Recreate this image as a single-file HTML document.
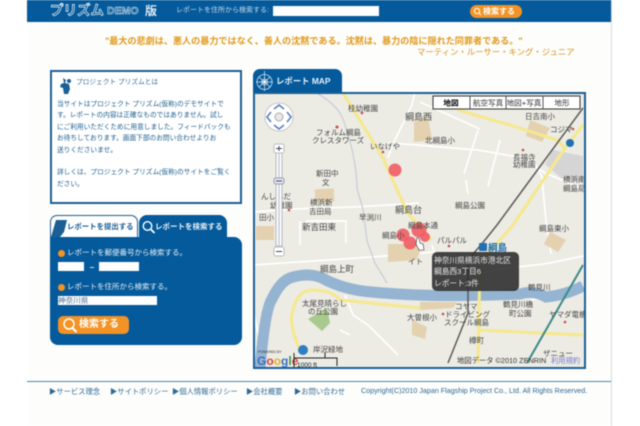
<!DOCTYPE html>
<html lang="ja"><head><meta charset="utf-8"><title>プリズム DEMO版</title>
<style>
html,body{margin:0;padding:0;background:#fff}
body{width:640px;height:426px;position:relative;overflow:hidden;font-family:"Liberation Sans","Noto Sans CJK JP",sans-serif}
#w{position:absolute;left:0;top:0;width:640px;height:426px;filter:blur(.4px)}
.a{position:absolute;white-space:nowrap}
.b{position:absolute}
svg text{font-family:"Liberation Sans","Noto Sans CJK JP",sans-serif}
</style></head><body><div id="w">
<div class="b" style="left:27px;top:0;width:584px;height:426px;background:#fdfdfc;border-right:1px solid #d8d8d8"></div>
<div class="b" style="left:27px;top:0;width:584px;height:22px;background:#045a9b"></div>
<div class="a" style="left:50px;top:1px;font-size:13.500px;line-height:20px;font-weight:bold;color:#045a9b;-webkit-text-stroke:.7px #e8f0f6">プリズム</div>
<div class="a" style="left:107px;top:1px;font-size:10.500px;line-height:20px;font-weight:bold;color:#045a9b;-webkit-text-stroke:.5px #e8f0f6">DEMO</div>
<div class="a" style="left:145px;top:1px;font-size:12px;line-height:20px;color:#dfeaf3;font-weight:bold">版</div>
<div class="a" style="left:176px;top:4px;font-size:7px;line-height:13px;color:#c6d8e8">レポートを住所から検索する:</div>
<div class="b" style="left:273px;top:6px;width:106px;height:10px;background:#fff"></div>
<div class="b" style="left:470px;top:5px;width:52px;height:13px;border-radius:7px;background:#f39325"></div>
<div class="a" style="left:483px;top:5px;font-size:8px;line-height:13px;font-weight:bold;color:#fff">検索する</div>
<svg class="b" style="left:473px;top:7px" width="9" height="9"><circle cx="4" cy="4" r="2.600" fill="none" stroke="#fff"/><path d="M6 6l2 2" stroke="#fff"/></svg>

<div class="a" style="left:105px;top:34px;font-size:9.100px;line-height:14px;color:#e09a1c;font-weight:bold">"最大の悲劇は、悪人の暴力ではなく、善人の沈黙である。沈黙は、暴力の陰に隠れた同罪者である。"</div>
<div class="a" style="left:417px;top:46px;font-size:8.400px;line-height:13px;color:#d8951e">マーティン・ルーサー・キング・ジュニア</div>

<div class="b" style="left:50px;top:70px;width:188px;height:130px;border:2px solid #1b5f94;background:#fff"></div>
<svg class="b" style="left:58px;top:77px" width="14" height="18"><path d="M5 1l3 2-1 3 4 1 1 5-2 5H6l-1-6-3-1 1-3 3-1z" fill="#1b5f94"/><circle cx="11" cy="4" r="2" fill="#1b5f94"/></svg>
<div class="a" style="left:76px;top:77px;font-size:6.700px;line-height:11px;color:#336f9b">プロジェクト プリズムとは</div>
<div class="a" style="left:57px;top:99px;font-size:6.700px;line-height:11.400px;color:#20618f">当サイトはプロジェクト プリズム(仮称)のデモサイトで<br>す。レポートの内容は正確なものではありません。試し<br>にご利用いただくために用意しました。フィードバックも<br>お待ちしております。画面下部のお問い合わせよりお<br>送りくださいませ。<br><br>詳しくは、プロジェクト プリズム(仮称)のサイトをご覧く<br>ださい。</div>

<div class="b" style="left:50px;top:215px;width:86px;height:22px;border:1px solid #1b5f94;border-bottom:0;border-radius:7px 7px 0 0;background:#fff"></div>
<svg class="b" style="left:51px;top:220px" width="17" height="17"><path d="M5 0h11l-3 12-4 5H0z" fill="#1b5f94"/></svg>
<div class="a" style="left:67px;top:221px;font-size:7.400px;line-height:11px;font-weight:bold;color:#1b5f94">レポートを提出する</div>
<div class="b" style="left:139px;top:215px;width:88px;height:30px;border-radius:8px 8px 0 0;background:#045a9b"></div>
<div class="b" style="left:50px;top:237px;width:192px;height:108px;border-radius:0 8px 8px 8px;background:#045a9b"></div>
<svg class="b" style="left:141px;top:220px" width="15" height="15"><circle cx="6.500" cy="6" r="4.300" fill="none" stroke="#fff" stroke-width="1.400"/><path d="M10 9.500l3.500 3.500" stroke="#fff" stroke-width="1.800"/></svg>
<div class="a" style="left:155px;top:221px;font-size:7.500px;line-height:11px;font-weight:bold;color:#e8f0f6">レポートを検索する</div>
<div class="b" style="left:58px;top:250px;width:7px;height:7px;border-radius:50%;background:#f39325"></div>
<div class="a" style="left:67px;top:247px;font-size:7.500px;line-height:12px;color:#e8f0f6">レポートを郵便番号から検索する。</div>
<div class="b" style="left:58px;top:262px;width:26px;height:9px;background:#fff"></div>
<div class="b" style="left:90px;top:267px;width:4px;height:1px;background:#cfdfea"></div>
<div class="b" style="left:99px;top:262px;width:40px;height:9px;background:#fff"></div>
<div class="b" style="left:58px;top:284px;width:7px;height:7px;border-radius:50%;background:#f39325"></div>
<div class="a" style="left:67px;top:281px;font-size:7.500px;line-height:12px;color:#e8f0f6">レポートを住所から検索する。</div>
<div class="b" style="left:58px;top:296px;width:99px;height:9px;background:#fff"></div>
<div class="a" style="left:58px;top:295px;font-size:7.600px;line-height:11px;color:#4b6f8c">神奈川県</div>
<div class="b" style="left:58px;top:316px;width:71px;height:18px;border-radius:5px;background:#f39325"></div>
<svg class="b" style="left:62px;top:317px" width="16" height="17"><circle cx="7" cy="7" r="5" fill="none" stroke="#fff" stroke-width="1.500"/><path d="M10.500 11l4 4" stroke="#fff" stroke-width="2.200"/></svg>
<div class="a" style="left:79px;top:318px;font-size:10px;line-height:14px;font-weight:bold;color:#fff">検索する</div>

<div class="b" style="left:253px;top:69px;width:89px;height:25px;border-radius:7px 7px 0 0;background:#045a9b"></div>
<svg class="b" style="left:255px;top:71px" width="19" height="20" fill="none" stroke="#cfe0ec" stroke-width=".8"><circle cx="9.500" cy="11" r="7.500"/><circle cx="9.500" cy="11" r="3"/><path d="M9.500 0v20M1 11h17M4 6l11 10M15 6L4 16"/><circle cx="9.500" cy="11" r="1.500" fill="#fff"/></svg>
<div class="a" style="left:276px;top:75px;font-size:8.400px;line-height:13px;font-weight:bold;color:#e8f0f6">レポート MAP</div>

<svg class="b" style="left:253px;top:92px" width="333" height="277" viewBox="253 92 333 277">
<rect x="253" y="92" width="333" height="277" fill="#ecebe4"/>
<g fill="none" stroke="#fff" stroke-width="1.700">
<path d="M253 212l40-3 60-2 54-3 12-1"/><path d="M253 265l90-6 70-5 20-2"/>
<path d="M388 158l4-12 20-41 3-13M388 143l28 2 16 1M420 102l60 27"/>
<path d="M428 146l50 4 45 8 22 15 44 18"/><path d="M530 155l12 22 4 45 5 32"/><path d="M500 140l-12 46M478 130l-14 44M466 180l2 14"/>
<path d="M300 245v-24M306 221h40v22M440 283l60-14 44-5 40-8M440 270l-8-25"/>
<path d="M345 295l8 20 15 10 30 30M340 330l10 5"/>
<path d="M253 310l8 36M530 300l50-10"/>
</g>
<path d="M315 92q22 12 28 27 14 40 14 70l6 20 4 32 8 22 12 20" fill="none" stroke="#bfc8d4"/>
<rect x="315" y="189" width="19" height="13" fill="#e3d1b0" transform="rotate(-3 324 195)"/>
<path d="M414 122l14-6 4 24-18 2z" fill="#e3d1b0"/><path d="M530 120l20 8-8 14-16-6z" fill="#e3d1b0"/>
<rect x="256" y="226" width="18" height="14" fill="#e3d1b0"/><path d="M388 244h36l-8 16-28 2z" fill="#e3d1b0"/>
<path d="M550 232l16 8-8 12-14-8z" fill="#e3d1b0"/>
<path d="M420 302h37l-4 6-33 2zM412 320l15 7-2 12-13-4z" fill="#e3d1b0"/>
<path d="M553 150l30 6v26l-22-4-16-14z" fill="#d5d5d5"/>
<path d="M327 308l3 15-8 8-14-12z" fill="#a9c98e"/>
<path d="M260 369q5-60 12-70 8-17 18-21 18-6 32 0 22 12 50 14 60 6 148 2 14-4 26 3 20-2 37-11" fill="none" stroke="#94b4d2" stroke-width="11"/>
<g fill="none" stroke="#f6e88c" stroke-width="3">
<path d="M343 93l40 65 24 54 25 28"/>
<path d="M458 110l52 15 47 15 8 8-52 77-33 38-2 100"/><path d="M583 125l-18 23"/><path d="M478 330l105 5"/>
<path d="M312 290q-14 0-19 20-5 14 7 40"/><path d="M312 290q20 0 28 10l80 8"/>
</g>
<path d="M583 108l-86 117-12 15-17 20v53l-20 50" fill="none" stroke="#5b5b5b" stroke-width="1.500"/>
<path d="M583 265l-56 98" fill="none" stroke="#3b8a88" stroke-width="2"/>
<g fill="#c0524e"><circle cx="362" cy="113" r="1.300"/><circle cx="337" cy="127" r="1.500"/><circle cx="383" cy="152" r="1.300"/><circle cx="289" cy="210" r="1.300"/><circle cx="523" cy="150" r="1.300"/><circle cx="573" cy="129" r="1.300"/><circle cx="449" cy="246" r="1.300"/><circle cx="443" cy="314" r="1.300"/><circle cx="565" cy="322" r="1.300"/></g>
<circle cx="570" cy="143" r="4" fill="#2070b0"/>
<g fill="#f05d64" fill-opacity=".9"><circle cx="395" cy="170" r="6.500"/><circle cx="403" cy="235" r="6.500"/><circle cx="410" cy="243" r="6.500"/><circle cx="419" cy="230" r="7.500"/><circle cx="425" cy="237" r="5"/></g>
<path d="M417 238l2 0 1 5 3 1 1 6-5 0-3-6z" fill="#fff" stroke="#333" stroke-width=".6"/>
<g font-size="7.500" fill="#444">
<text x="348" y="111">桂幼稚園</text><text x="316" y="135">フォルム綱島</text><text x="312" y="143">クレスタワーズ</text><text x="370" y="149">いなげや</text>
<text x="405" y="120" font-size="9">綱島西</text><text x="316" y="176">新田中</text><text x="322" y="185">文</text><text x="261" y="199">んしんだ</text><text x="270" y="208">幼稚園</text>
<text x="310" y="205">横浜新</text><text x="309" y="214">吉田局</text><text x="259" y="220">田小</text><text x="359" y="220">早渕川</text>
<text x="395" y="213" font-size="9">綱島台</text><text x="302" y="230" font-size="8.500">新吉田東</text><text x="382" y="238">綱島小</text><text x="408" y="228">綱島本通</text>
<text x="320" y="272" font-size="8.500">綱島上町</text><text x="302" y="306">太尾見晴らし</text><text x="308" y="314">の丘公園</text><text x="313" y="352">岸沢緑地</text>
<text x="425" y="143">北綱島小</text><text x="455" y="208">綱島公園</text><text x="525" y="119">日吉南小</text><text x="550" y="132">コジマ</text><text x="513" y="160">長福寺</text><text x="513" y="167">幼稚園</text>
<text x="563" y="182">横浜南</text><text x="563" y="191">綱島局</text><text x="437" y="243">パルパル</text><text x="539" y="231">綱島東小</text><text x="528" y="290">鶴見川</text>
<text x="503" y="307">鶴見川橋</text><text x="509" y="316">町公園</text><text x="455" y="309">コヤマ</text><text x="445" y="317">ドライビング</text><text x="444" y="325">スクール綱島</text><text x="407" y="320">大曽根小</text>
<text x="549" y="317">ヤマダ電機</text><text x="469" y="343">樽町</text><text x="543" y="356">ザニュー</text><text x="408" y="264">イト</text>
</g>
<rect x="479" y="243" width="8" height="8" rx="1" fill="#2070b0"/>
<text x="488" y="251" font-size="9.500" font-weight="bold" fill="#1f6ea8">綱島</text>
<text x="457" y="363" font-size="7.300" fill="#333">地図データ ©2010 ZENRIN</text><text x="551" y="363" font-size="7.300" fill="#7a7acb">利用規約</text>
<text x="258" y="353" font-size="3.500" fill="#333">POWERED BY</text>
<text x="257" y="365" font-size="12" font-weight="bold" fill="#3a6fc0">G<tspan fill="#d8443a">o</tspan><tspan fill="#e3b32a">o</tspan><tspan fill="#3a6fc0">g</tspan><tspan fill="#3a9a4a">l</tspan><tspan fill="#d8443a">e</tspan></text>
<circle cx="303" cy="350" r="5" fill="#2f7fc0"/>
<path d="M294 353v14M294 358h43v8M325 352v6" fill="none" stroke="#222"/><text x="297" y="367" font-size="6.500" fill="#222">1000 ft</text>
<circle cx="279" cy="117" r="14" fill="#fff" stroke="#c8c8c8"/><path d="M274 109l5-4 5 4M274 125l5 4 5-4M271 112l-4 5 4 5M287 112l4 5-4 5" fill="none" stroke="#5a80c0" stroke-width="1.600"/><circle cx="279" cy="117" r="4" fill="#e8e8e8" stroke="#aaa"/>
<rect x="276" y="146" width="6" height="100" fill="#fff" stroke="#b8b8b8"/><path d="M279 146v100" stroke="#cfd6e6" stroke-width="2"/>
<rect x="274" y="144" width="10" height="9" rx="2" fill="#fff" stroke="#bbb"/><path d="M276 148.500h6M279 146v5" stroke="#446"/>
<rect x="274" y="178" width="10" height="6" rx="2" fill="#e4e8f2" stroke="#99a"/><path d="M276 181h6" stroke="#446"/>
<rect x="274" y="247" width="10" height="9" rx="2" fill="#fff" stroke="#bbb"/><path d="M276 251.500h6" stroke="#446"/>
<rect x="433" y="96" width="147" height="13" fill="#fff" stroke="#333"/><path d="M470 96v13M506 96v13M543 96v13" stroke="#555"/>
<g font-size="7.600" fill="#333" text-anchor="middle"><text x="451" y="105.500" font-weight="bold" fill="#000">地図</text><text x="488" y="105.500">航空写真</text><text x="524" y="105.500">地図+写真</text><text x="562" y="105.500">地形</text></g>
<rect x="432" y="252" width="87" height="39" rx="5" fill="#303030" fill-opacity=".9"/>
<g font-size="7.700" fill="#e8e8e8"><text x="434" y="263">神奈川県横浜市港北区</text><text x="434" y="274">綱島西3丁目6</text><text x="434" y="286">レポート:3件</text></g>
<rect x="254" y="93" width="331" height="275" fill="none" stroke="#1b5f94" stroke-width="2"/>
</svg>

<div class="b" style="left:27px;top:381px;width:584px;height:1px;background:#4b86ad"></div>
<div class="a" style="left:49px;top:386px;font-size:7.300px;line-height:11px;color:#2f6a94">▶サービス理念</div>
<div class="a" style="left:110px;top:386px;font-size:7.300px;line-height:11px;color:#2f6a94">▶サイトポリシー</div>
<div class="a" style="left:172px;top:386px;font-size:7.300px;line-height:11px;color:#2f6a94">▶個人情報ポリシー</div>
<div class="a" style="left:246px;top:386px;font-size:7.300px;line-height:11px;color:#2f6a94">▶会社概要</div>
<div class="a" style="left:294px;top:386px;font-size:7.300px;line-height:11px;color:#2f6a94">▶お問い合わせ</div>
<div class="a" style="left:361px;top:386px;font-size:7.150px;line-height:11px;color:#2f6a94">Copyright(C)2010 Japan Flagship Project Co., Ltd. All Rights Reserved.</div>
</div></body></html>
